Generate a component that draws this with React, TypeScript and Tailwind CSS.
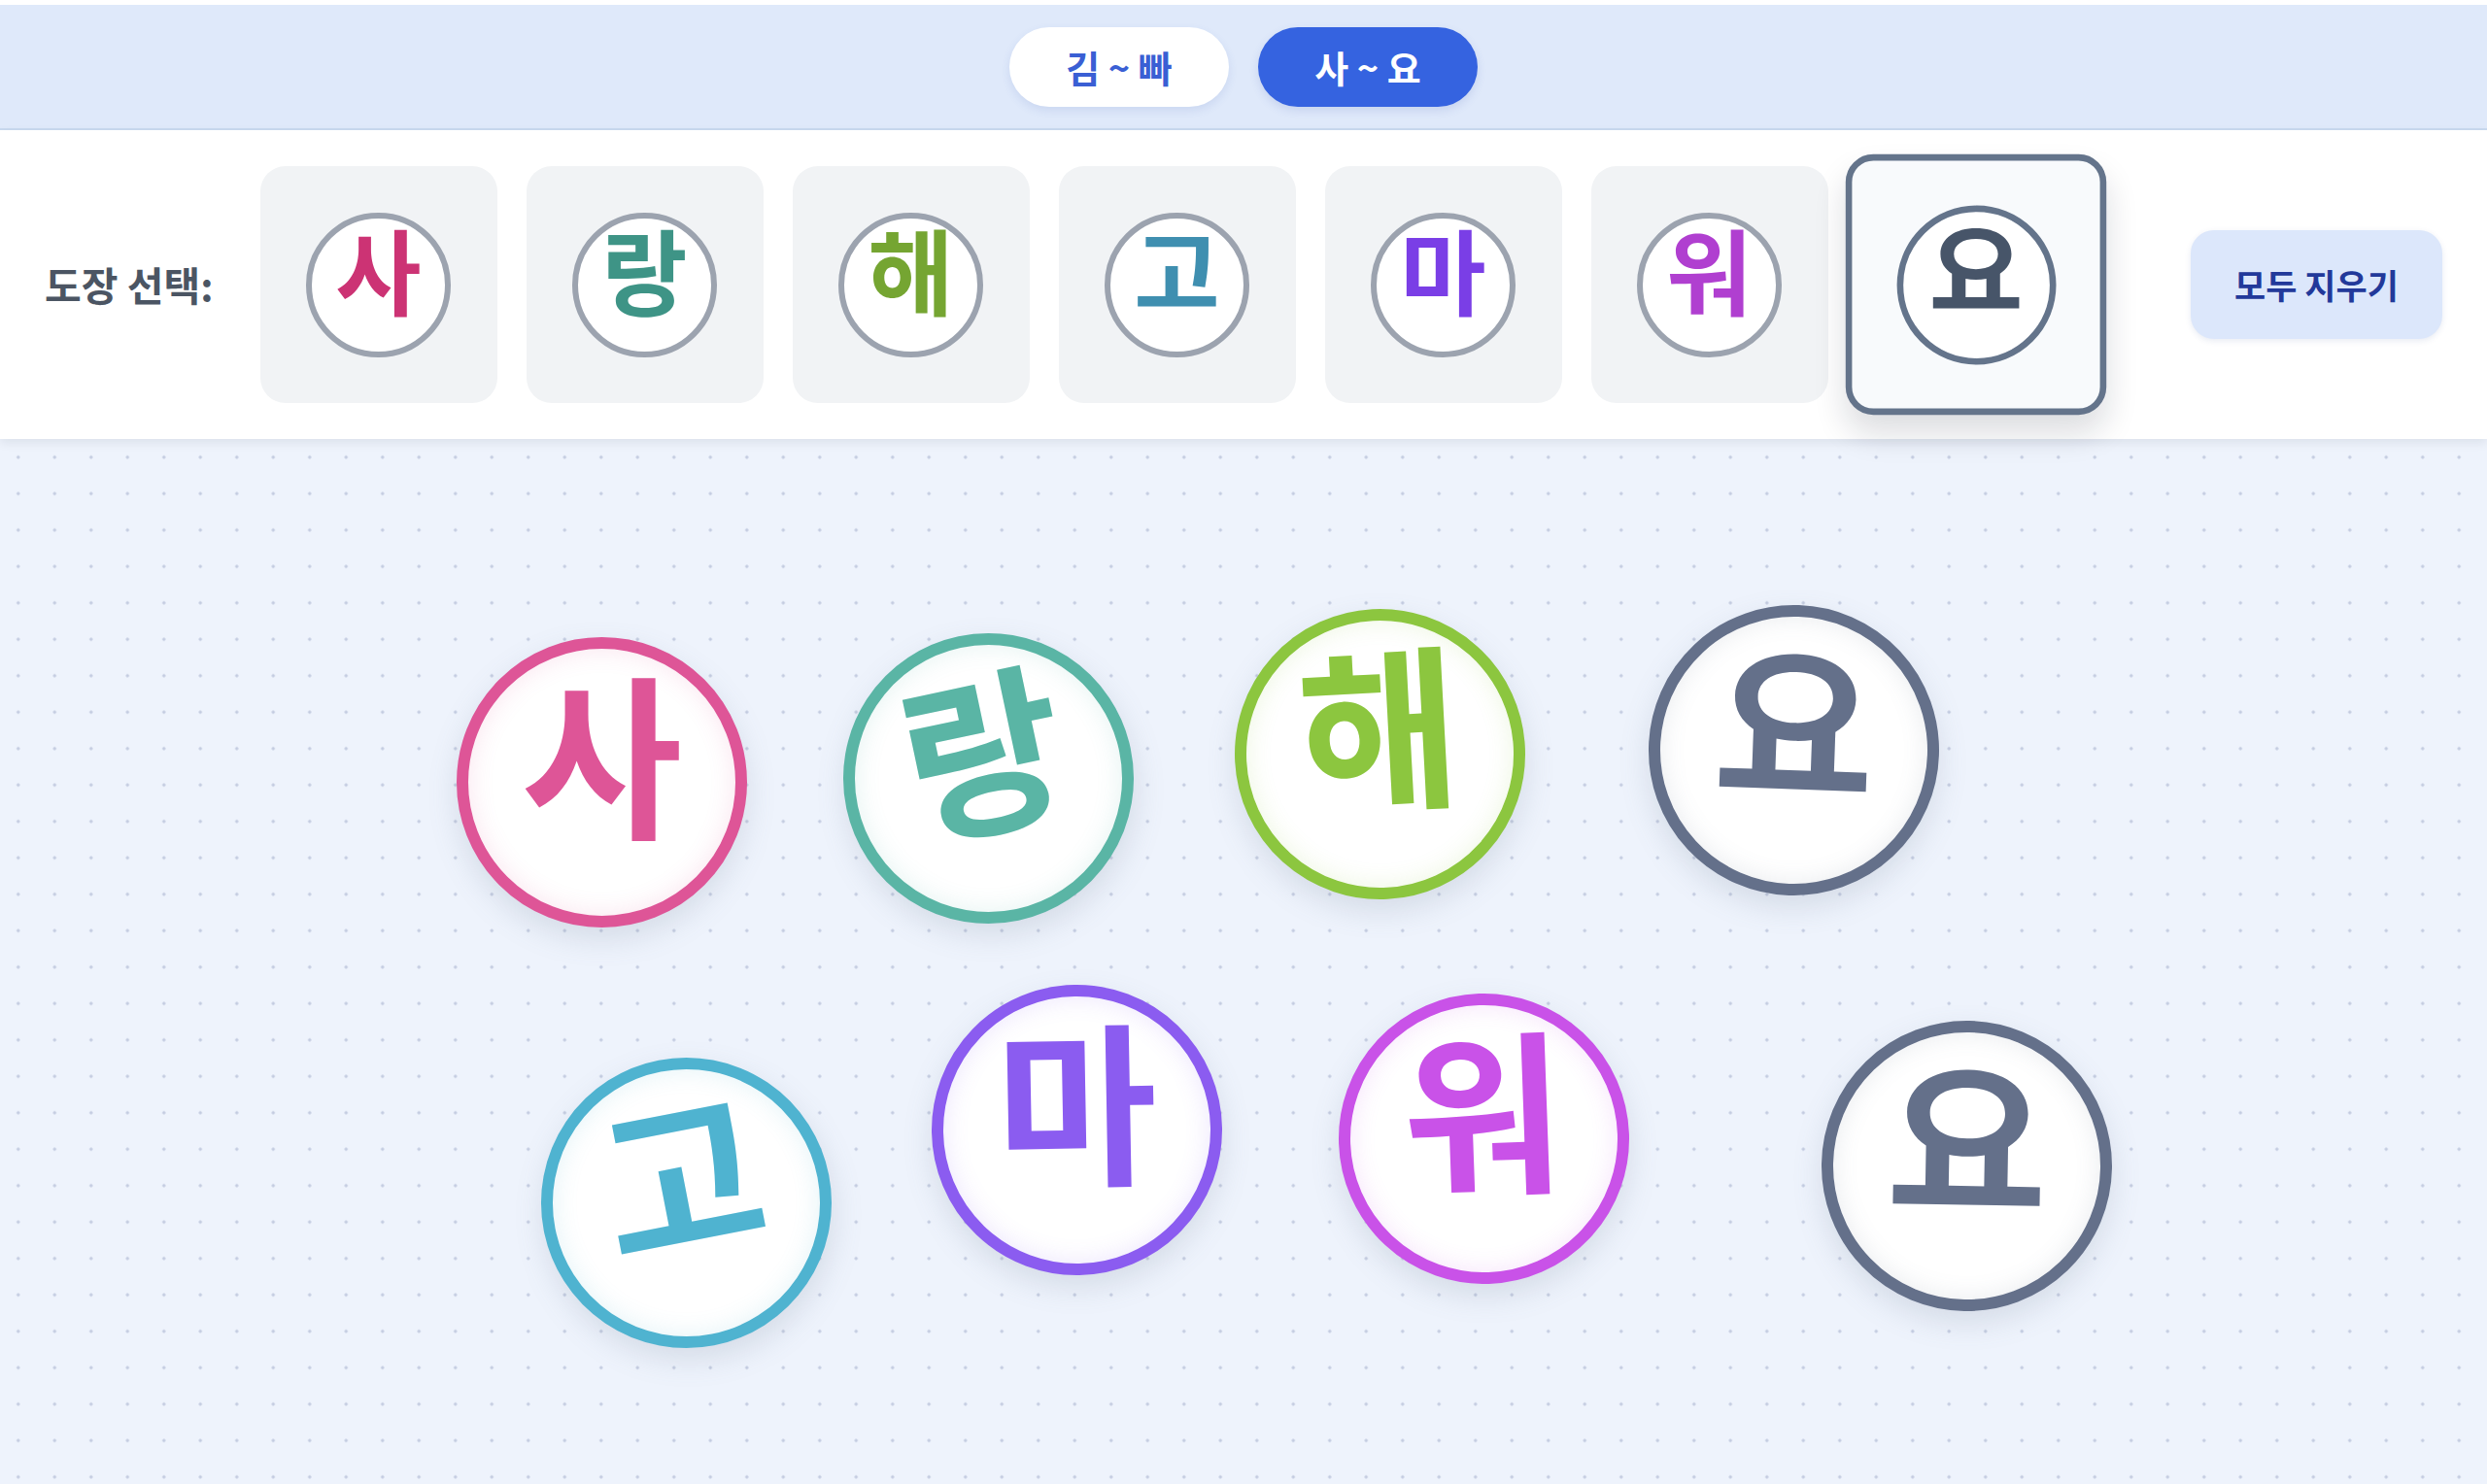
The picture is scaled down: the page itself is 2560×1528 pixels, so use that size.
import { useState } from 'react'

const font = "font-['Noto_Sans_CJK_KR','Noto_Sans',sans-serif]"

const picks = [
  { ch: '사', text: 'text-[#cc3374]' },
  { ch: '랑', text: 'text-[#3e9486]' },
  { ch: '해', text: 'text-[#75a532]' },
  { ch: '고', text: 'text-[#3f8fb0]' },
  { ch: '마', text: 'text-[#7a3ee6]' },
  { ch: '워', text: 'text-[#b03fd0]' },
  { ch: '요', text: 'text-[#475569]' },
]

// placed stamps on the board (left/top relative to board)
const placed = [
  { ch: '사', x: 470, y: 204, rot: 'rotate-0', cls: 'border-[#de5597] text-[#de5597] shadow-[0_12px_30px_rgba(100,116,139,0.18),inset_0_0_26px_rgba(222,85,151,0.16)]' },
  { ch: '랑', x: 868, y: 200, rot: '-rotate-12', cls: 'border-[#5ab5a5] text-[#5ab5a5] shadow-[0_12px_30px_rgba(100,116,139,0.18),inset_0_0_26px_rgba(90,181,165,0.16)]' },
  { ch: '해', x: 1271, y: 175, rot: '-rotate-3', cls: 'border-[#8cc63f] text-[#8cc63f] shadow-[0_12px_30px_rgba(100,116,139,0.18),inset_0_0_26px_rgba(140,198,63,0.16)]' },
  { ch: '요', x: 1697, y: 171, rot: 'rotate-2', cls: 'border-[#64708a] text-[#64708a] shadow-[0_12px_30px_rgba(100,116,139,0.18),inset_0_0_26px_rgba(100,112,138,0.14)]' },
  { ch: '고', x: 557, y: 637, rot: '-rotate-[11deg]', cls: 'border-[#4fb3d0] text-[#4fb3d0] shadow-[0_12px_30px_rgba(100,116,139,0.18),inset_0_0_26px_rgba(79,179,208,0.16)]' },
  { ch: '마', x: 959, y: 562, rot: '-rotate-1', cls: 'border-[#8b5cf0] text-[#8b5cf0] shadow-[0_12px_30px_rgba(100,116,139,0.18),inset_0_0_26px_rgba(139,92,240,0.16)]' },
  { ch: '워', x: 1378, y: 571, rot: '-rotate-2', cls: 'border-[#c952e8] text-[#c952e8] shadow-[0_12px_30px_rgba(100,116,139,0.18),inset_0_0_26px_rgba(201,82,232,0.16)]' },
  { ch: '요', x: 1875, y: 599, rot: 'rotate-1', cls: 'border-[#64708a] text-[#64708a] shadow-[0_12px_30px_rgba(100,116,139,0.18),inset_0_0_26px_rgba(100,112,138,0.14)]' },
]

export default function App() {
  const [range, setRange] = useState<'a' | 'b'>('b')
  const [selected, setSelected] = useState(6)

  return (
    <div className={`flex h-[1528px] w-full flex-col bg-white pt-[5px] ${font}`}>
      {/* range tabs */}
      <div className="flex h-[129px] shrink-0 items-center justify-center gap-[30px] border-b-2 border-[#c9d9ef] bg-[#dfe9fa]">
        <button
          onClick={() => setRange('a')}
          className={`h-[82px] w-[226px] rounded-full text-[38px] font-bold shadow-[0_4px_10px_rgba(59,90,180,0.12)] ${range === 'a' ? 'bg-[#3563e0] text-white' : 'bg-white text-[#3a5fd4]'}`}
        >
          김 ~ 빠
        </button>
        <button
          onClick={() => setRange('b')}
          className={`h-[82px] w-[226px] rounded-full text-[38px] font-bold shadow-[0_4px_10px_rgba(59,90,180,0.15)] ${range === 'b' ? 'bg-[#3563e0] text-white' : 'bg-white text-[#3a5fd4]'}`}
        >
          사 ~ 요
        </button>
      </div>

      {/* stamp picker */}
      <div className="relative z-10 flex h-[318px] shrink-0 items-center justify-between bg-white px-[46px] shadow-[0_4px_10px_rgba(15,23,42,0.08)]">
        <div className="flex items-center gap-[48px]">
          <span className="text-[41px] font-bold text-[#4b5563]">도장 선택:</span>
          <div className="flex items-center gap-[30px]">
            {picks.map((p, i) => {
              const on = i === selected
              return (
                <button
                  key={i}
                  onClick={() => setSelected(i)}
                  className={`flex h-[244px] w-[244px] items-center justify-center rounded-[26px] ${on ? 'scale-110 border-[6px] border-[#64748b] bg-[#f8fafc] shadow-[0_18px_30px_rgba(15,23,42,0.14)]' : 'bg-[#f1f3f5]'}`}
                >
                  <div
                    className={`flex h-[149px] w-[149px] items-center justify-center rounded-full border-[6px] bg-white ${on ? 'border-[#64748b]' : 'border-[#9ca3af]'}`}
                  >
                    <span className={`-translate-y-[17px] text-[96px] font-bold leading-none ${p.text}`}>
                      {p.ch}
                    </span>
                  </div>
                </button>
              )
            })}
          </div>
        </div>
        <button className="h-[112px] w-[259px] rounded-[24px] bg-[#dce7fb] text-[35px] font-semibold text-[#22399a] shadow-[0_2px_6px_rgba(30,58,138,0.1)]">
          모두 지우기
        </button>
      </div>

      {/* board */}
      <div className="relative flex-1 overflow-hidden bg-[#eef3fc] bg-[radial-gradient(circle,#c3cbe0_1.4px,transparent_1.8px)] bg-[length:37.5px_37.5px]">
        {placed.map((s, i) => (
          <div
            key={i}
            style={{ left: s.x, top: s.y }}
            className={`absolute flex h-[299px] w-[299px] items-center justify-center rounded-full border-[12px] bg-white ${s.rot} ${s.cls}`}
          >
            <span className="-translate-y-[35px] text-[180px] font-bold leading-none">{s.ch}</span>
          </div>
        ))}
      </div>
    </div>
  )
}
